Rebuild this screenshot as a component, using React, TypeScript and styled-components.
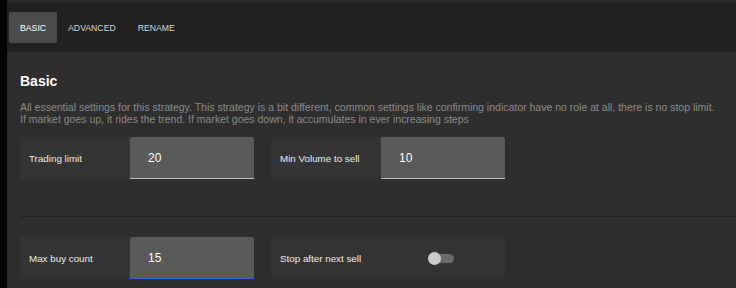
import React, { useState } from 'react';
import styled, { createGlobalStyle } from 'styled-components';

const GlobalStyle = createGlobalStyle`
  html, body {
    margin: 0;
    padding: 0;
    background: #050505;
    font-family: 'Liberation Sans', Arial, sans-serif;
  }
`;

interface Field {
  label: string;
  value: string;
  focused?: boolean;
}

const firstRow: Field[] = [
  { label: 'Trading limit', value: '20' },
  { label: 'Min Volume to sell', value: '10' },
];

const App = () => {
  const [tab, setTab] = useState('BASIC');
  const [stopAfterSell, setStopAfterSell] = useState(false);

  return (
    <Page>
      <GlobalStyle />
      <SideStrip />
      <Main>
        <TopBand />
        <TabBar>
          {['BASIC', 'ADVANCED', 'RENAME'].map((t) => (
            <Tab key={t} active={t === tab} onClick={() => setTab(t)}>
              {t}
            </Tab>
          ))}
        </TabBar>
        <Content>
          <Title>Basic</Title>
          <Description>
            All essential settings for this strategy. This strategy is a bit different, common settings like
            confirming indicator have no role at all, there is no stop limit.
            <br />
            If market goes up, it rides the trend. If market goes down, it accumulates in ever increasing steps
          </Description>
          <Row top={12}>
            {firstRow.map((f) => (
              <Card key={f.label}>
                <Label>{f.label}</Label>
                <Input defaultValue={f.value} />
              </Card>
            ))}
          </Row>
          <Divider />
          <Row top={20}>
            <Card>
              <Label>Max buy count</Label>
              <Input defaultValue="15" focused />
            </Card>
            <Card>
              <Label>Stop after next sell</Label>
              <SwitchWrap onClick={() => setStopAfterSell(!stopAfterSell)}>
                <Track on={stopAfterSell}>
                  <Thumb on={stopAfterSell} />
                </Track>
              </SwitchWrap>
            </Card>
          </Row>
        </Content>
      </Main>
    </Page>
  );
};

export default App;

const Page = styled.div`
  display: flex;
  width: 736px;
  height: 288px;
  overflow: hidden;
`;

const SideStrip = styled.div`
  width: 7px;
  flex-shrink: 0;
  background: #050505;
`;

const Main = styled.div`
  flex: 1;
  display: flex;
  flex-direction: column;
  background: #2e2e2e;
`;

const TopBand = styled.div`
  height: 3px;
  background: #2b2b2b;
`;

const TabBar = styled.div`
  display: flex;
  align-items: center;
  height: 49px;
  padding-left: 2px;
  background: #212121;
`;

const Tab = styled.div<{ active: boolean }>`
  height: 31px;
  display: flex;
  align-items: center;
  padding: 0 11px;
  border-radius: 2px;
  font-size: 8.7px;
  color: ${(p) => (p.active ? '#ffffff' : '#d8d8d8')};
  background: ${(p) => (p.active ? '#4b4b4b' : 'transparent')};
  cursor: pointer;
`;

const Content = styled.div`
  padding: 20px 0 0 13px;
`;

const Title = styled.div`
  font-size: 14px;
  font-weight: bold;
  color: #ffffff;
  line-height: 18px;
`;

const Description = styled.div`
  margin-top: 11px;
  font-size: 10.5px;
  line-height: 12px;
  color: #8a8a8a;
`;

const Row = styled.div<{ top: number }>`
  display: flex;
  gap: 17px;
  margin-top: ${(p) => p.top}px;
`;

const Card = styled.div`
  display: flex;
  align-items: center;
  width: 234px;
  height: 42px;
  border-radius: 3px;
  background: #343434;
`;

const Label = styled.div`
  width: 101px;
  padding-left: 9px;
  font-size: 9.8px;
  color: #ebebeb;
`;

const Input = styled.input<{ focused?: boolean }>`
  box-sizing: border-box;
  width: 124px;
  height: 42px;
  padding: 0 0 0 18px;
  border: none;
  border-bottom: 1px solid ${(p) => (p.focused ? '#1f6fd6' : '#bdbdbd')};
  border-radius: 2px 2px 0 0;
  outline: none;
  background: #5a5a5a;
  color: #ffffff;
  font-family: 'Liberation Sans', Arial, sans-serif;
  font-size: 12px;
`;

const Divider = styled.div`
  height: 1px;
  margin-top: 37px;
  background: #222222;
`;

const SwitchWrap = styled.div`
  margin-left: 47px;
  cursor: pointer;
`;

const Track = styled.div<{ on: boolean }>`
  position: relative;
  width: 26px;
  height: 9px;
  border-radius: 5px;
  background: ${(p) => (p.on ? '#3d7bd6' : '#6b6b6b')};
`;

const Thumb = styled.div<{ on: boolean }>`
  position: absolute;
  top: -2px;
  left: ${(p) => (p.on ? '13px' : '0')};
  width: 13px;
  height: 13px;
  border-radius: 50%;
  background: #cacaca;
`;
